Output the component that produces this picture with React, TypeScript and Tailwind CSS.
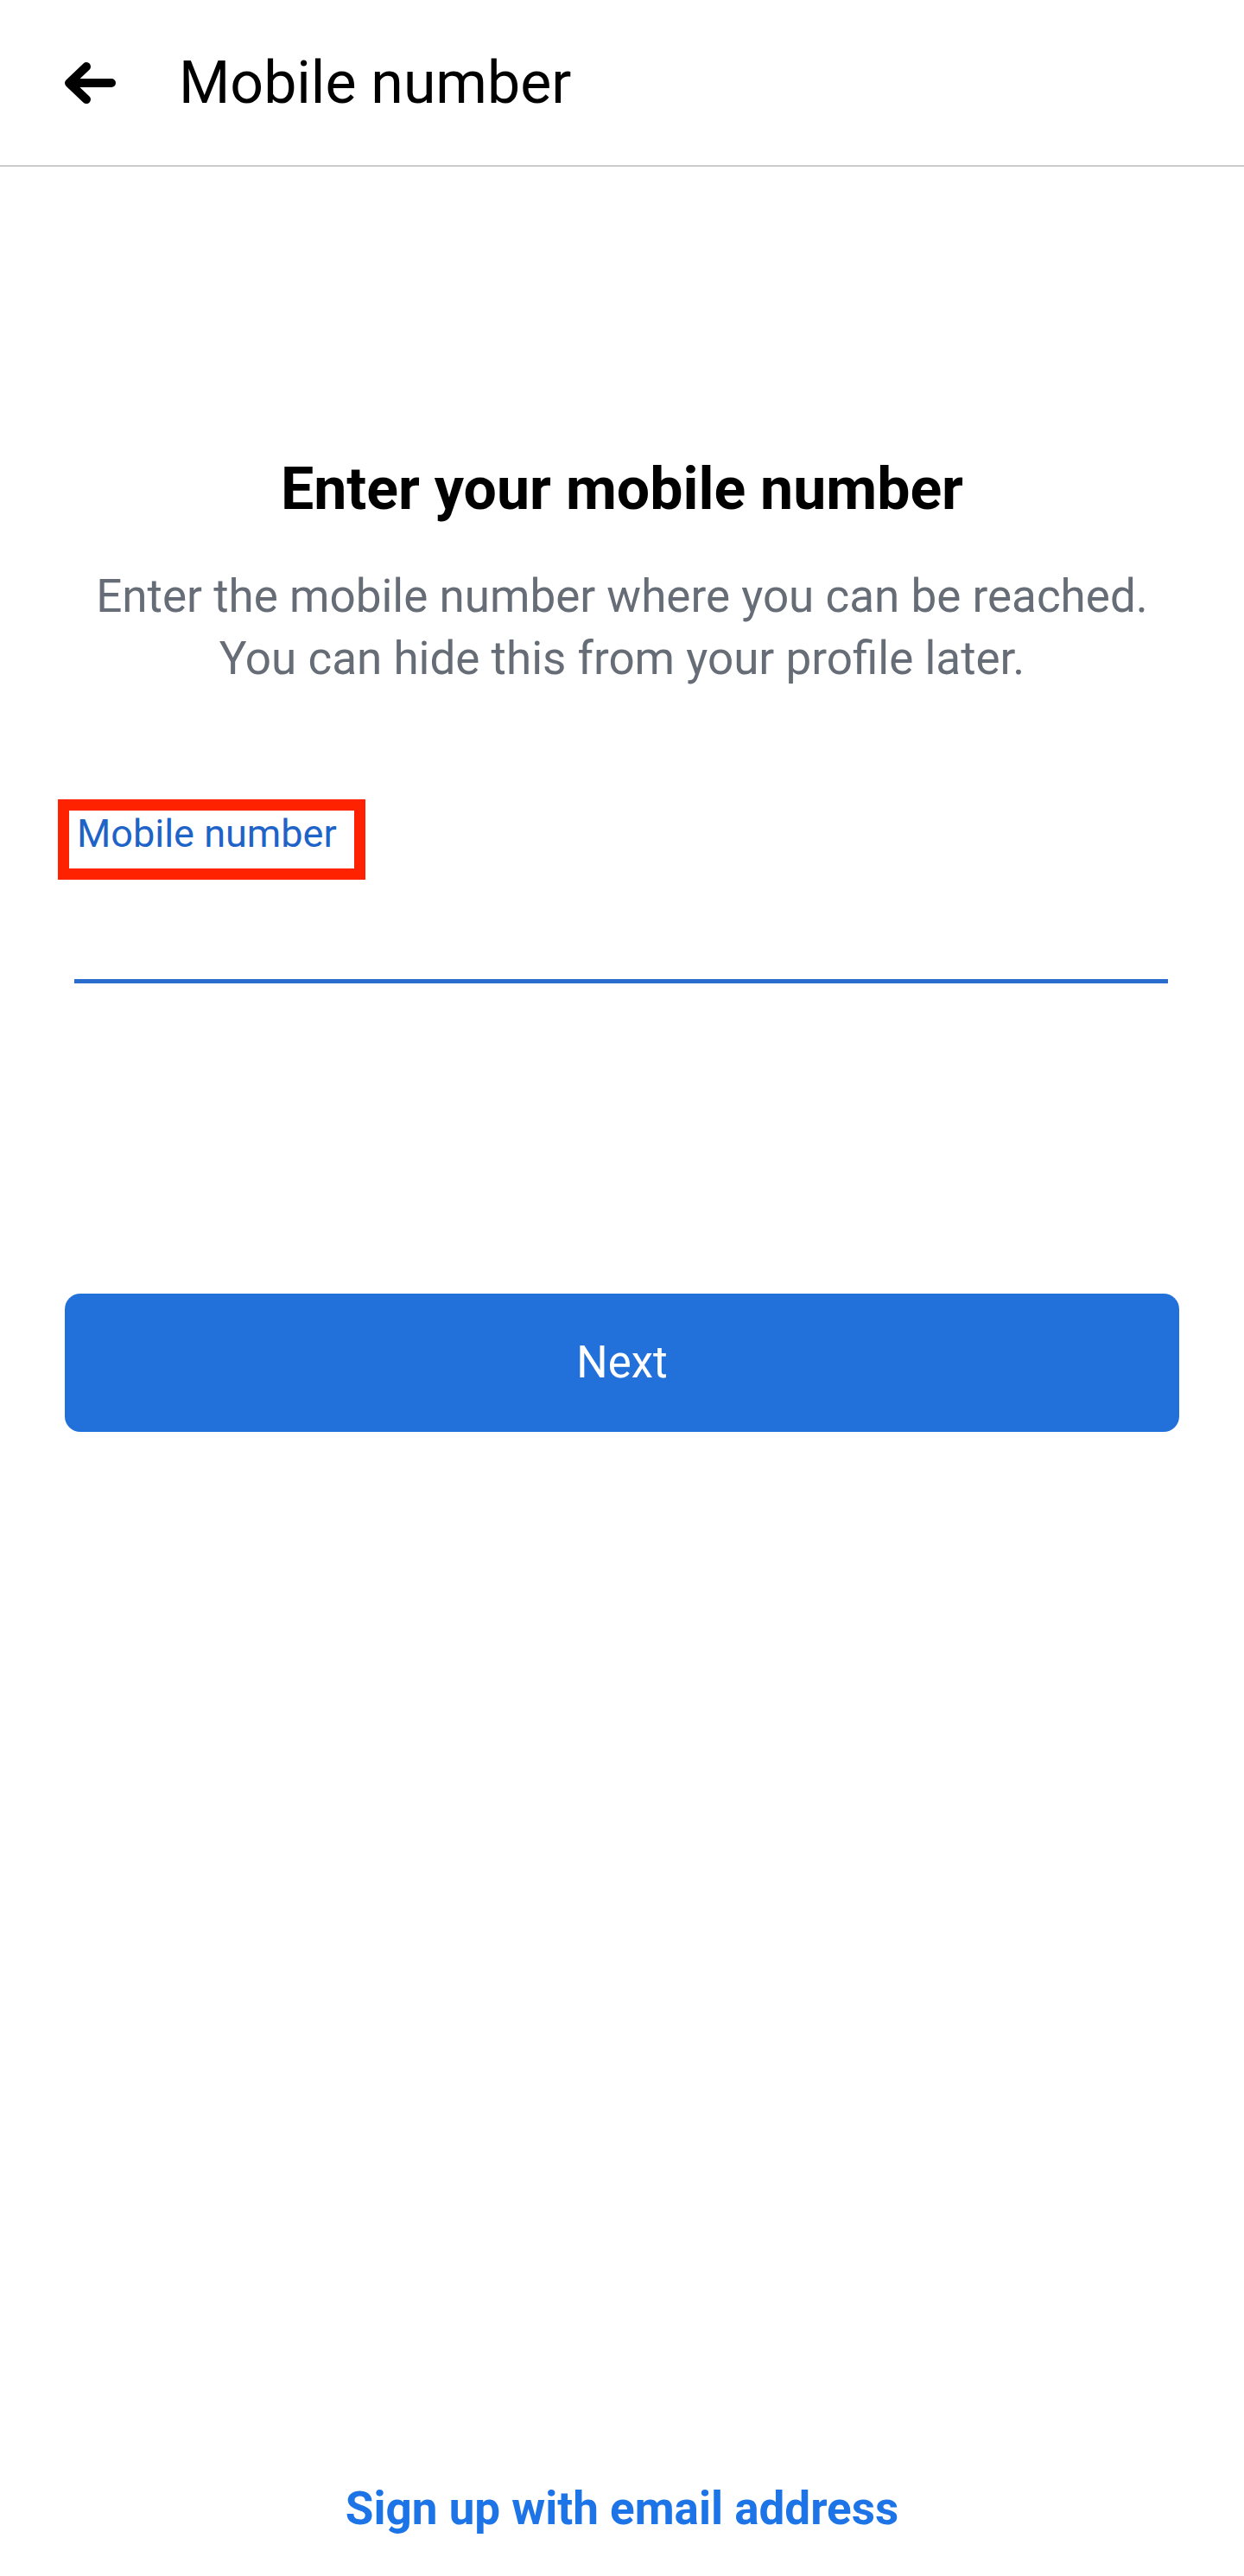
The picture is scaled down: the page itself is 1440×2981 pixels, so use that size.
import { useState } from 'react'

function BackArrow() {
  return (
    <svg width="64" height="54" viewBox="0 0 64 54" fill="none" stroke="currentColor" strokeWidth="10" strokeLinecap="round" strokeLinejoin="round">
      <path d="M57 27H9M28 8L8 27l20 19" />
    </svg>
  )
}

export default function App() {
  const [phone, setPhone] = useState('')

  return (
    <div className="flex min-h-[2981px] flex-col bg-white font-['Roboto',sans-serif] text-black">
      <header className="flex h-[193px] items-center border-b-2 border-[#cbcdcb]">
        <button type="button" className="ml-[72px] text-black">
          <BackArrow />
        </button>
        <h1 className="ml-[71px] text-[68px] font-normal leading-[80px]">Mobile number</h1>
      </header>

      <main className="flex flex-col">
        <h2 className="mt-[333px] text-center text-[68px] font-bold leading-[80px]">Enter your mobile number</h2>
        <p className="mt-[48px] text-center text-[53px] leading-[72px] text-[#676d77]">
          Enter the mobile number where you can be reached.
          <br />
          You can hide this from your profile later.
        </p>

        <div className="mt-[127px] flex">
          <label
            htmlFor="phone"
            className="ml-[67px] border-[13px] border-[#ff2200] pb-[13px] pl-[9px] pr-[20px] text-[45px] leading-[54px] text-[#1e63c7]"
          >
            Mobile number
          </label>
        </div>
        <input
          id="phone"
          type="tel"
          value={phone}
          onChange={(e) => setPhone(e.target.value)}
          className="ml-[86px] mr-[88px] mt-[56px] h-[64px] border-b-[5px] border-[#2b6dcc] bg-transparent text-[52px] outline-none"
        />

        <button
          type="button"
          className="mx-[75px] mt-[359px] flex h-[160px] items-center justify-center rounded-[18px] bg-[#2271db] text-[51px] text-white"
        >
          Next
        </button>
      </main>

      <div className="flex-1" />

      <a href="#" className="mb-[46px] text-center text-[53px] font-bold leading-[64px] text-[#1c74e6]">
        Sign up with email address
      </a>
    </div>
  )
}
